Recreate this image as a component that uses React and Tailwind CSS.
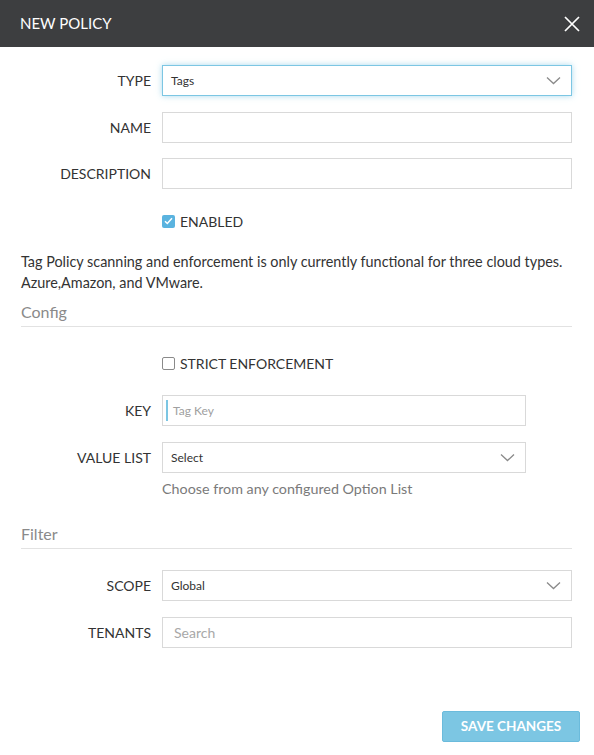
import React from "react";

function Chevron() {
  return (
    <svg width="15" height="9" viewBox="0 0 15 9" fill="none" className="shrink-0">
      <path d="M1 1.5l6.5 6 6.5-6" stroke="#8a8a8a" strokeWidth="1.3" />
    </svg>
  );
}

function Label({ children }) {
  return <div className="flex h-[31px] items-center justify-end text-[14px] text-[#333]">{children}</div>;
}

function SelectBox({ value, focused = false }) {
  return (
    <div
      className={
        focused
          ? "flex h-[31px] items-center justify-between border border-[#7cc6e3] bg-white pl-[8px] pr-[10px] shadow-[0_0_6px_rgba(124,198,227,0.65)]"
          : "flex h-[31px] items-center justify-between border border-[#d9d9d9] bg-white pl-[8px] pr-[10px]"
      }
    >
      <span className="text-[12px] text-[#333]">{value}</span>
      <Chevron />
    </div>
  );
}

function TextBox({ children }) {
  return <div className="flex h-[31px] items-center border border-[#d9d9d9] bg-white">{children}</div>;
}

function Section({ title }) {
  return (
    <div className="border-b border-[#e2e2e2] pb-[2px] text-[16px] leading-[24px] text-[#8a8a8a]">{title}</div>
  );
}

export default function App() {
  return (
    <div className="min-h-screen bg-white font-['Lato','Liberation_Sans',sans-serif]">
      <header className="flex h-[47px] items-center justify-between bg-[#3d3e40] pl-[20px] pr-[14px]">
        <h1 className="text-[15px] text-white">NEW POLICY</h1>
        <svg width="16" height="16" viewBox="0 0 16 16" fill="none">
          <path d="M1 1l14 14M15 1L1 15" stroke="#fff" strokeWidth="1.7" />
        </svg>
      </header>

      <div className="pb-[13px] pl-[21px] pr-[22px]">
        <div className="grid grid-cols-[130px_1fr] gap-x-[11px] gap-y-[15.5px] pt-[18px]">
          <Label>TYPE</Label>
          <SelectBox value="Tags" focused />
          <Label>NAME</Label>
          <TextBox />
          <Label>DESCRIPTION</Label>
          <TextBox />
        </div>

        <div className="mt-[20px] flex h-[24px] items-center gap-[5px] pl-[141px] text-[14px] text-[#333]">
          <span className="flex h-[13px] w-[13px] items-center justify-center rounded-[2px] bg-[#5ab3df]">
            <svg width="9" height="8" viewBox="0 0 9 8" fill="none">
              <path d="M1 4.2l2.3 2.3L8 1.2" stroke="#fff" strokeWidth="1.5" />
            </svg>
          </span>
          ENABLED
        </div>

        <p className="mt-[18px] text-[14.4px] leading-[21px] text-[#333]">
          Tag Policy scanning and enforcement is only currently functional for three cloud types. Azure,Amazon, and VMware.
        </p>

        <div className="mt-[7px]">
          <Section title="Config" />
        </div>

        <div className="mt-[24px] flex h-[24px] items-center gap-[5px] pl-[141px] text-[14px] text-[#333]">
          <span className="h-[13px] w-[13px] rounded-[2px] border border-[#8a8a8a] bg-white" />
          STRICT ENFORCEMENT
        </div>

        <div className="mt-[20px] grid grid-cols-[130px_364px] gap-x-[11px] gap-y-[16px]">
          <Label>KEY</Label>
          <TextBox>
            <span className="ml-[3px] h-[21px] w-[2px] bg-[#7cc6e3]" />
            <span className="ml-[5px] text-[12px] text-[#a0a0a0]">Tag Key</span>
          </TextBox>
          <Label>VALUE LIST</Label>
          <SelectBox value="Select" />
        </div>
        <div className="mt-[6px] pl-[141px] text-[14.3px] leading-[20px] text-[#7a7a7a]">
          Choose from any configured Option List
        </div>

        <div className="mt-[23px]">
          <Section title="Filter" />
        </div>

        <div className="mt-[21px] grid grid-cols-[130px_1fr] gap-x-[11px] gap-y-[16px]">
          <Label>SCOPE</Label>
          <SelectBox value="Global" />
          <Label>TENANTS</Label>
          <TextBox>
            <span className="ml-[11px] text-[14px] text-[#a8a8a8]">Search</span>
          </TextBox>
        </div>

        <div className="mt-[63px] flex justify-end">
          <button
            type="button"
            className="-mr-[8px] h-[31px] w-[138px] rounded-[2px] border border-[#6bbbdc] bg-[#7cc6e3] text-[13.5px] font-bold text-white"
          >
            SAVE CHANGES
          </button>
        </div>
      </div>
    </div>
  );
}
